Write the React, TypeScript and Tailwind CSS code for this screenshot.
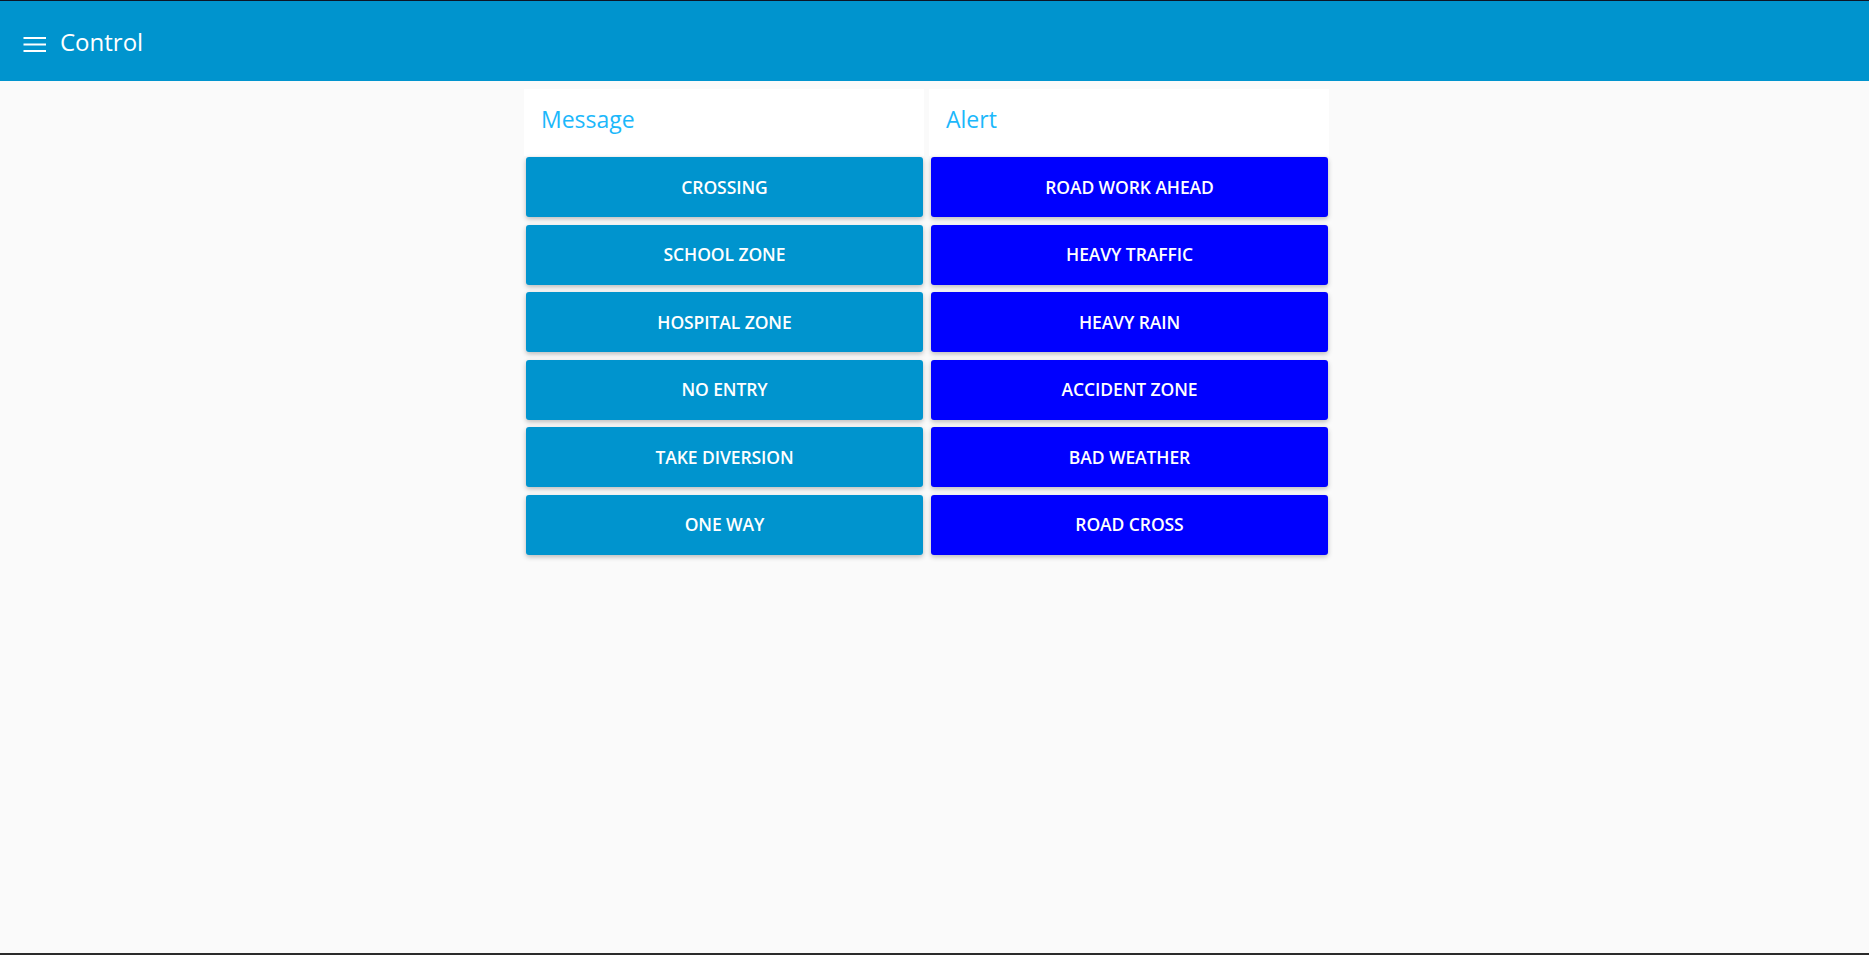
import React from 'react';

const messages = ["CROSSING", "SCHOOL ZONE", "HOSPITAL ZONE", "NO ENTRY", "TAKE DIVERSION", "ONE WAY"];
const alerts = ["ROAD WORK AHEAD", "HEAVY TRAFFIC", "HEAVY RAIN", "ACCIDENT ZONE", "BAD WEATHER", "ROAD CROSS"];

const MenuIcon = () => (
  <svg width="24" height="16" viewBox="0 0 24 16" className="block">
    <rect x="0.5" y="0" width="22.5" height="2" fill="#fff" />
    <rect x="0.5" y="6.5" width="22.5" height="2" fill="#fff" />
    <rect x="0.5" y="13" width="22.5" height="2" fill="#fff" />
  </svg>
);

const Group = ({ title, items, color }: { title: string; items: string[]; color: string }) => (
  <div className="w-[400px] flex flex-col">
    {/* group header */}
    <div className="h-[67px] bg-white pl-[17px] pt-[14px]">
      <h3 className="text-[23px] leading-[32px] text-[#1cb8fb]">{title}</h3>
    </div>
    <div className="mt-[1px] flex flex-col gap-[7.5px] pl-[2px]">
      {items.map((label) => (
        <button
          key={label}
          className={`w-[397px] h-[60px] rounded-[3px] flex items-center justify-center text-white text-[17.5px] font-semibold tracking-[-0.005em] shadow-[0_2px_5px_rgba(0,0,0,0.26)] ${color}`}
        >
          {label}
        </button>
      ))}
    </div>
  </div>
);

export default function App() {
  return (
    <div
      className="w-[1869px] h-[955px] flex flex-col bg-[#fafafa] overflow-hidden"
      style={{ fontFamily: '"Open Sans", "Noto Sans", sans-serif' }}
    >
      <div className="h-[1px] bg-[#0d1526]" />
      {/* toolbar */}
      <header className="h-[80px] bg-[#0094ce] flex items-center pl-[23px] shrink-0">
        <div className="mt-[8px]">
          <MenuIcon />
        </div>
        <h1 className="ml-[13px] mt-[2px] text-white text-[24px] leading-[32px]">Control</h1>
      </header>

      <main className="flex-1 flex gap-[5px] pl-[524px] pt-[8px]">
        <Group title="Message" items={messages} color="bg-[#0094ce]" />
        <Group title="Alert" items={alerts} color="bg-[#0000ff]" />
      </main>
      <div className="h-[2px] bg-[#2b2b2b]" />
    </div>
  );
}
